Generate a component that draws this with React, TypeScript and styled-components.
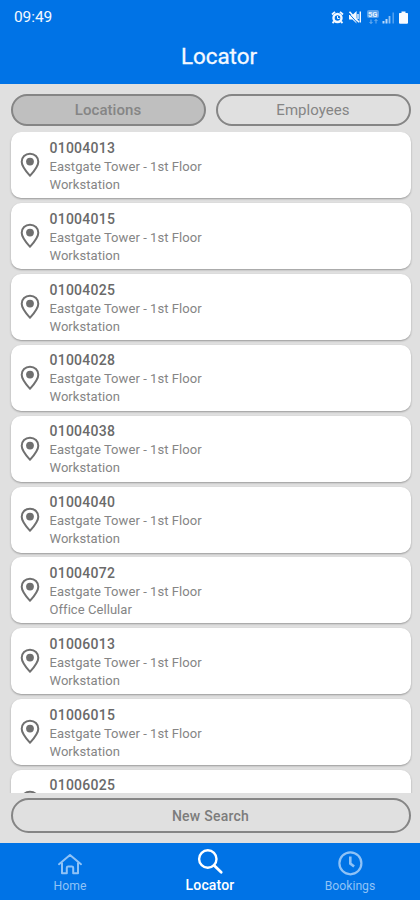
import React from "react";
import styled, { createGlobalStyle } from "styled-components";

const Global = createGlobalStyle`
  * { box-sizing: border-box; }
  body { margin: 0; background: #e0e0e0; font-family: Roboto, sans-serif; }
  button { font-family: inherit; padding: 0; margin: 0; }
`;

const Screen = styled.div`
  width: 420px;
  height: 900px;
  display: flex;
  flex-direction: column;
  overflow: hidden;
  background: #e0e0e0;
`;

const Header = styled.header`
  height: 83.5px;
  flex: none;
  background: #0073e6;
  color: #f4f9ff;
`;

const StatusBar = styled.div`
  height: 34px;
  padding: 0 11px 0 14px;
  display: flex;
  align-items: center;
  justify-content: space-between;
`;

const Time = styled.span`
  font-size: 15.5px;
  line-height: 36px;
  letter-spacing: -0.1px;
`;

const Title = styled.h1`
  margin: 0;
  padding-left: 18px;
  text-align: center;
  font-size: 22.4px;
  font-weight: 400;
  line-height: 44px;
  -webkit-text-stroke: 0.3px currentColor;
`;

const Tabs = styled.div`
  flex: none;
  display: flex;
  gap: 10px;
  padding: 10px 9.5px 0 10.5px;
`;

const Pill = styled.button<{ $active?: boolean; $wide?: boolean }>`
  flex: 1;
  height: ${(p) => (p.$wide ? 35 : 32)}px;
  border: 2px solid #858585;
  border-radius: 18px;
  background: ${(p) => (p.$active ? "#bfbfbf" : "#e0e0e0")};
  color: ${(p) => (p.$wide ? "#7c7c7c" : "#858585")};
  font-size: ${(p) => (p.$wide ? 14 : 15)}px;
  font-weight: ${(p) => (p.$active || p.$wide ? 500 : 400)};
  letter-spacing: ${(p) => (p.$wide ? 0.25 : 0.05)}px;
  ${(p) => p.$wide && "padding-top: 2px;"}
`;

const List = styled.ul`
  list-style: none;
  margin: 6.9px 0 0;
  padding: 0 9.5px 0 10.5px;
  height: 661px;
  flex: none;
  overflow: hidden;
  display: flex;
  flex-direction: column;
  gap: 4.85px;
`;

const Card = styled.li`
  height: 66px;
  flex: none;
  display: flex;
  align-items: center;
  gap: 9.7px;
  padding-left: 9.3px;
  border-radius: 10px;
  background: #fff;
  box-shadow: 0 1px 2px rgba(0, 0, 0, 0.32);
`;

const Details = styled.div`
  display: flex;
  flex-direction: column;
  padding-top: 2px;
  color: #858585;
  font-size: 13px;
  line-height: 18px;
  letter-spacing: 0.06px;
`;

const Code = styled.span`
  color: #6a6a6a;
  font-size: 14px;
  font-weight: 500;
  line-height: 19px;
  letter-spacing: 0.25px;
`;

const Footer = styled.div`
  flex: none;
  height: 49.6px;
  display: flex;
  padding: 4.5px 9.5px 0 10.5px;
`;

const Nav = styled.nav`
  flex: 1;
  display: grid;
  grid-template-columns: repeat(3, 1fr);
  background: #0073e6;
`;

const NavItem = styled.a<{ $active?: boolean }>`
  display: flex;
  flex-direction: column;
  align-items: center;
  padding-top: ${(p) => (p.$active ? 5 : 7.4)}px;
  color: ${(p) => (p.$active ? "#fff" : "#8fc2f6")};
  font-size: ${(p) => (p.$active ? 14 : 12.2)}px;
  font-weight: ${(p) => (p.$active ? 500 : 400)};
  letter-spacing: ${(p) => (p.$active ? 0.15 : 0)}px;
  line-height: 16px;
  svg { display: block; margin-bottom: ${(p) => (p.$active ? 1.2 : 2)}px; }
`;

const PinIcon = () => (
  <svg width="20" height="26" viewBox="0 -0.5 20 26" fill="none">
    <path d="M10 1.2C5.2 1.2 1.7 4.6 1.7 9.2c0 4.9 4.8 10.1 8.3 14.1 3.5-4 8.3-9.2 8.3-14.1 0-4.6-3.5-8-8.3-8Z" stroke="#707070" strokeWidth="2" strokeLinejoin="round" />
    <circle cx="10" cy="9.1" r="3.9" fill="#707070" />
  </svg>
);

const StatusIcons = () => (
  <svg width="79" height="16" viewBox="330 8 79 16" fill="none" stroke="#f4f9ff">
    <circle cx="337.5" cy="17" r="4" strokeWidth="2.4" />
    <path d="M332 13.5l3-2.6M343 13.5l-3-2.6M334 20.5l-1.5 1.5M341 20.5l1.5 1.5" strokeWidth="1.8" />
    <path d="M337.5 15v2.5h2" strokeWidth="1" />
    <path d="M349 14h3.4l4.2-4v12.5l-4.2-4H349z" fill="#f4f9ff" stroke="none" />
    <path d="M348.5 12l9 10" stroke="#0073e6" strokeWidth="1" />
    <path d="M349.5 10.8l9.5 10.5" strokeWidth="1.6" />
    <path d="M358 13v5M360.3 10.5v11" strokeWidth="1.4" />
    <rect x="367" y="9" width="12" height="8" rx="2" fill="#5ba2ec" stroke="none" />
    <text x="368" y="15.7" fontSize="7.5" fontWeight="700" fill="#e5f2ff" stroke="none">5G</text>
    <path d="M371 18.5v4m-1.5-1.5 1.5 1.5 1.5-1.5M376 22.5v-4m-1.5 1.5 1.5-1.5 1.5 1.5" stroke="#8dc0f3" strokeWidth="0.8" />
    <path d="M383.5 20v2.5M386.5 18v4.5" stroke="#b7d8fa" strokeWidth="2" />
    <path d="M389.5 15v7.5" stroke="#8fc1f4" strokeWidth="1.8" />
    <path d="M393.2 11.5v11" stroke="#5ba5ef" strokeWidth="1.4" />
    <path d="M401.5 10.5h4V12h1.8q.7 0 .7.7v9q0 1-1 1h-7q-1 0-1-1v-9q0-.7.7-.7h1.8z" fill="#f8fbff" stroke="none" />
  </svg>
);

const HomeIcon = () => (
  <svg width="26" height="26" viewBox="0 -3 26 26" fill="none" stroke="currentColor" strokeWidth="2" strokeLinejoin="round" strokeLinecap="round">
    <path d="M2 11.2 13 2l11 9.2M5 9.8v10.4h4.8v-5.4q0-1.4 1.4-1.4h3.6q1.4 0 1.4 1.4v5.4H21V9.8" />
  </svg>
);

const SearchIcon = () => (
  <svg width="28" height="28" viewBox="-0.6 0 28 28" fill="none" stroke="currentColor" strokeLinecap="round">
    <circle cx="11.2" cy="11" r="8.7" strokeWidth="2.4" />
    <path d="m17.6 17.4 7 6.9" strokeWidth="2.8" />
  </svg>
);

const ClockIcon = () => (
  <svg width="26" height="26" viewBox="0 0 26 26" fill="none" stroke="currentColor">
    <circle cx="13.4" cy="13.3" r="11" strokeWidth="2.2" />
    <path d="M13.3 6.6v7l3.8 3" strokeWidth="2.6" />
  </svg>
);

const locations = [
  ["01004013", "Workstation"],
  ["01004015", "Workstation"],
  ["01004025", "Workstation"],
  ["01004028", "Workstation"],
  ["01004038", "Workstation"],
  ["01004040", "Workstation"],
  ["01004072", "Office Cellular"],
  ["01006013", "Workstation"],
  ["01006015", "Workstation"],
  ["01006025", "Workstation"],
];

export default function App() {
  return (
    <Screen>
      <Global />
      <Header>
        <StatusBar>
          <Time>09:49</Time>
          <StatusIcons />
        </StatusBar>
        <Title>Locator</Title>
      </Header>
      <Tabs>
        <Pill $active>Locations</Pill>
        <Pill>Employees</Pill>
      </Tabs>
      <List>
        {locations.map(([code, kind]) => (
          <Card key={code}>
            <PinIcon />
            <Details>
              <Code>{code}</Code>
              <span>Eastgate Tower - 1st Floor</span>
              <span>{kind}</span>
            </Details>
          </Card>
        ))}
      </List>
      <Footer>
        <Pill $wide>New Search</Pill>
      </Footer>
      <Nav>
        <NavItem><HomeIcon />Home</NavItem>
        <NavItem $active><SearchIcon />Locator</NavItem>
        <NavItem><ClockIcon />Bookings</NavItem>
      </Nav>
    </Screen>
  );
}
